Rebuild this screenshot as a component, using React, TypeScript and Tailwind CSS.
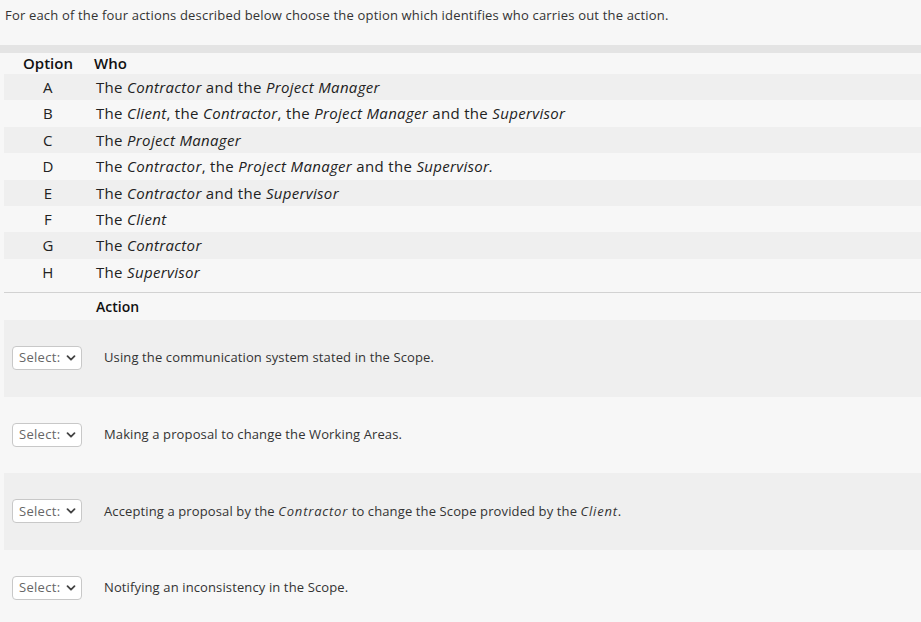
import React from "react";

const rows: { opt: string; who: React.ReactNode }[] = [
  { opt: "A", who: <>The <i>Contractor</i> and the <i>Project Manager</i></> },
  { opt: "B", who: <>The <i>Client</i>, the <i>Contractor</i>, the <i>Project Manager</i> and the <i>Supervisor</i></> },
  { opt: "C", who: <>The <i>Project Manager</i></> },
  { opt: "D", who: <>The <i>Contractor</i>, the <i>Project Manager</i> and the <i>Supervisor.</i></> },
  { opt: "E", who: <>The <i>Contractor</i> and the <i>Supervisor</i></> },
  { opt: "F", who: <>The <i>Client</i></> },
  { opt: "G", who: <>The <i>Contractor</i></> },
  { opt: "H", who: <>The <i>Supervisor</i></> },
];

const actions: React.ReactNode[] = [
  <>Using the communication system stated in the Scope.</>,
  <>Making a proposal to change the Working Areas.</>,
  <>Accepting a proposal by the <i className="tracking-[0.8px]">Contractor</i> to change the Scope provided by the <i className="tracking-[0.8px]">Client</i>.</>,
  <>Notifying an inconsistency in the Scope.</>,
];

function SelectBox() {
  return (
    <div className="flex h-[24px] w-[70px] shrink-0 items-center justify-between rounded-[4px] border border-[#c8c8c8] bg-white pl-[6px] pr-[5px] text-[13px] tracking-[0.3px] text-[#666]">
      <span>Select:</span>
      <svg width="10" height="10" viewBox="0 0 10 10" fill="none">
        <path d="M1.5 3.2 L5 6.7 L8.5 3.2" stroke="#444" strokeWidth="1.8" strokeLinecap="round" strokeLinejoin="round" />
      </svg>
    </div>
  );
}

export default function App() {
  return (
    <div className="min-h-screen bg-[#f7f7f7] text-[#222]" style={{ fontFamily: '"Open Sans", "Noto Sans", sans-serif' }}>
      <div className="px-[5px] pt-[6px] text-[13px] leading-[18px] tracking-[0.18px] text-[#333]">
        For each of the four actions described below choose the option which identifies who carries out the action.
      </div>
      <div className="mt-[21px] h-[8px] bg-[#e4e4e4]" />
      <div className="pl-[4px]">
        <div className="flex h-[21px] items-center text-[15px] font-semibold text-[#111]">
          <div className="w-[88px] text-center">Option</div>
          <div className="pl-[2px]">Who</div>
        </div>
        {rows.map((r, i) => (
          <div
            key={r.opt}
            className={`flex h-[26.4px] items-center text-[15px] tracking-[0.32px] text-[#222] ${i % 2 === 0 ? "bg-[#efefef]" : ""}`}
          >
            <div className="w-[88px] text-center">{r.opt}</div>
            <div className="pl-[4px]">{r.who}</div>
          </div>
        ))}
        <div className="h-[6.8px]" />
        <div className="border-t border-[#d2d2d2]" />
        <div className="flex h-[27px] items-center pl-[92px] text-[14px] font-semibold text-[#111]">Action</div>
        {actions.map((a, i) => (
          <div
            key={i}
            className={`flex h-[76.6px] items-center pl-[8px] ${i % 2 === 0 ? "bg-[#efefef]" : ""}`}
          >
            <SelectBox />
            <div className="pl-[22px] text-[13px] tracking-[0.12px] text-[#333]">{a}</div>
          </div>
        ))}
      </div>
    </div>
  );
}
